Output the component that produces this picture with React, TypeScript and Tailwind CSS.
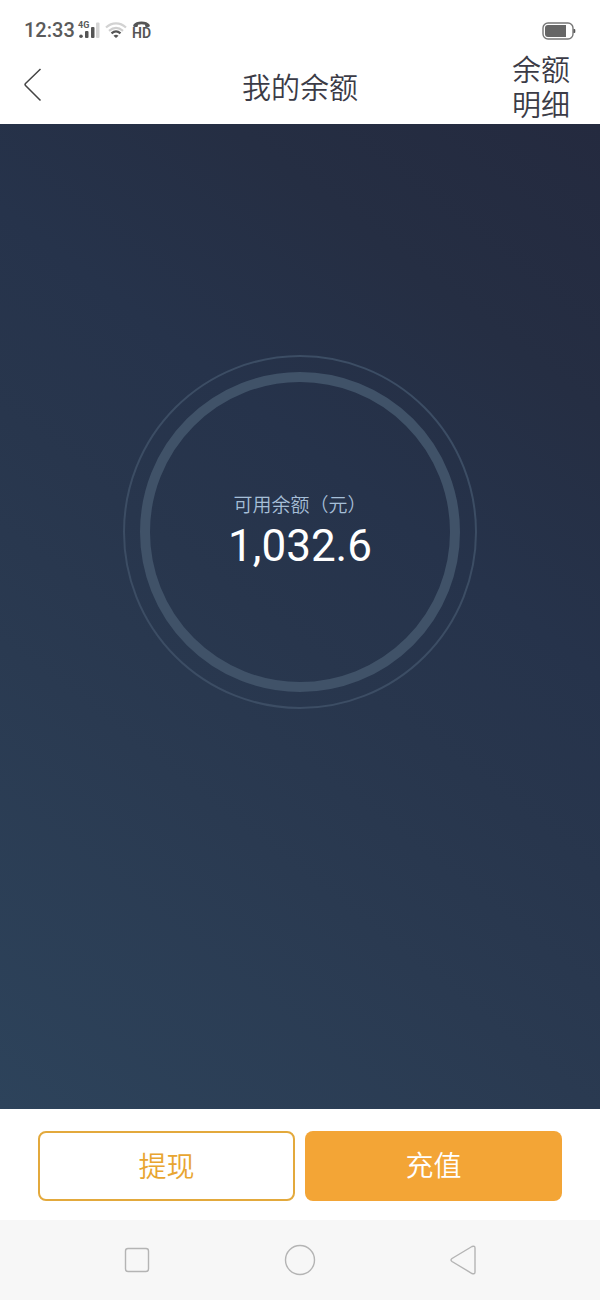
import type { ReactNode } from "react";

const SignalIcon = () => (
  <svg width="22" height="20" viewBox="0 0 22 20" className="overflow-visible" aria-label="4G signal">
    <text x="-1" y="8" fontSize="9" fontWeight="700" fill="#5a5a5a" fontFamily="Roboto, sans-serif">
      4G
    </text>
    <circle cx="2" cy="16.2" r="1.8" fill="#555" />
    <rect x="6" y="11" width="3.5" height="7" rx="1" fill="#555" />
    <rect x="12" y="7" width="3.5" height="11" rx="1" fill="#555" />
    <rect x="17" y="2.5" width="3.5" height="15.5" rx="1" fill="#d4d4d4" />
  </svg>
);

const WifiIcon = () => (
  <svg width="22" height="18" viewBox="0 0 22 18" fill="none" strokeWidth="2.2" aria-label="Wi-Fi">
    <path d="M1 6.5C7 1 15 1 21 6.5" stroke="#d2d2d2" />
    <path d="M4 9.8C8.5 6 13.5 6 18 9.8" stroke="#cfcfcf" />
    <path d="M6.5 12.4c3-2.7 6-2.7 9 0" stroke="#555" />
    <path d="M8.5 14.7q2.5-1.7 5 0L11 17z" fill="#555" />
  </svg>
);

const HdCallIcon = () => (
  <svg width="22" height="24" viewBox="-2 -2 22 24" className="overflow-visible" aria-label="HD call">
    <path
      d="M.2 5C3 .4 14 .4 16.8 5q.3 2-1.3 2h-2.2q-1.2 0-1.2-1.2V4.8q-3.6-1-7.2 0v1q0 1.2-1.2 1.2H1.5Q-.1 7 .2 5z"
      fill="#555"
    />
    <text x="-1" y="18" fontSize="14" fontWeight="600" fill="#555" fontFamily="Roboto, sans-serif">
      HD
    </text>
  </svg>
);

const BatteryIcon = () => (
  <svg width="34" height="18" viewBox="0 0 34 18" aria-label="Battery">
    <rect x="1" y="1" width="30" height="16" rx="5" fill="none" stroke="#777" strokeWidth="1.4" />
    <path d="M6 3h18v12H6q-3 0-3-3V6q0-3 3-3z" fill="#666" />
    <path d="M31.5 7h.8q1 0 1 1v2q0 1-1 1h-.8z" fill="#555" />
  </svg>
);

const StatusBar = () => (
  <div className="flex h-12 items-end justify-between px-6 pb-2 text-[#5a5a5a]">
    <div className="flex h-5 items-center gap-1">
      <span className="text-xl leading-5 font-medium">12:33</span>
      <SignalIcon />
      <WifiIcon />
      <HdCallIcon />
    </div>
    <BatteryIcon />
  </div>
);

const Header = () => (
  <header className="grid grid-cols-[1fr_auto_1fr] items-center px-[30px] pt-1.5 text-[29px] leading-[35px] font-[350] text-[#3b3b46]">
    <button type="button" aria-label="返回" className="mb-2 -ml-1.5 justify-self-start">
      <svg width="18" height="34" viewBox="0 0 18 34" fill="none" stroke="#444" strokeWidth="1.5">
        <path d="M16.5 1 1.5 15.5q-1 1 0 2L16.5 32.5" />
      </svg>
    </button>
    <h1>我的余额</h1>
    <a href="#details" className="w-[58px] justify-self-end">
      余额明细
    </a>
  </header>
);

const NavButton = ({ label, children }: { label: string; children: ReactNode }) => (
  <button type="button" aria-label={label} className="flex size-9 items-center justify-center">
    <svg width="32" height="32" viewBox="0 0 32 32" fill="none" stroke="#b4b4b4" strokeWidth="1.4">
      {children}
    </svg>
  </button>
);

export default function App() {
  return (
    <div className="flex min-h-screen flex-col bg-white font-[Roboto,'Noto_Sans_CJK_SC',sans-serif]">
      <StatusBar />
      <Header />

      <main className="flex flex-1 flex-col items-center bg-linear-[218deg,#242a3f_0%,#252e43_20%,#26334b_38%,#28364d_52%,#2a3a51_68%,#2d435b_100%] pt-[231px]">
        <div className="rounded-full border-2 border-[#3c4d64] p-[15px]">
          <div className="flex size-80 flex-col items-center justify-center rounded-full border-10 border-[#405268]">
            <p className="text-[19px] leading-7 font-[350] text-[#a6bfd8]">可用余额（元）</p>
            <p className="text-[44px] leading-[52px] text-white">1,032.6</p>
          </div>
        </div>
      </main>

      <footer className="grid grid-cols-2 gap-2.5 px-[38px] pt-[22px] pb-[19px] text-[28px] font-[350]">
        <button type="button" className="h-[70px] rounded-lg border-2 border-[#e3a93c] pt-1 text-[#e8a530]">
          提现
        </button>
        <button type="button" className="h-[70px] rounded-lg bg-[#f3a536] pt-0.5 text-white">
          充值
        </button>
      </footer>

      <nav className="flex h-20 items-center justify-around bg-[#f7f7f7] px-[55px]">
        <NavButton label="最近任务">
          <rect x="4.5" y="4.5" width="23" height="23" rx="2.5" />
        </NavButton>
        <NavButton label="主屏幕">
          <circle cx="16" cy="16" r="14.5" />
        </NavButton>
        <NavButton label="后退">
          <path d="M25 2.5 5 14.5q-2 1.5 0 3L25 29.5q3 1 3-1.5V4q0-2.5-3-1.5z" />
        </NavButton>
      </nav>
    </div>
  );
}
